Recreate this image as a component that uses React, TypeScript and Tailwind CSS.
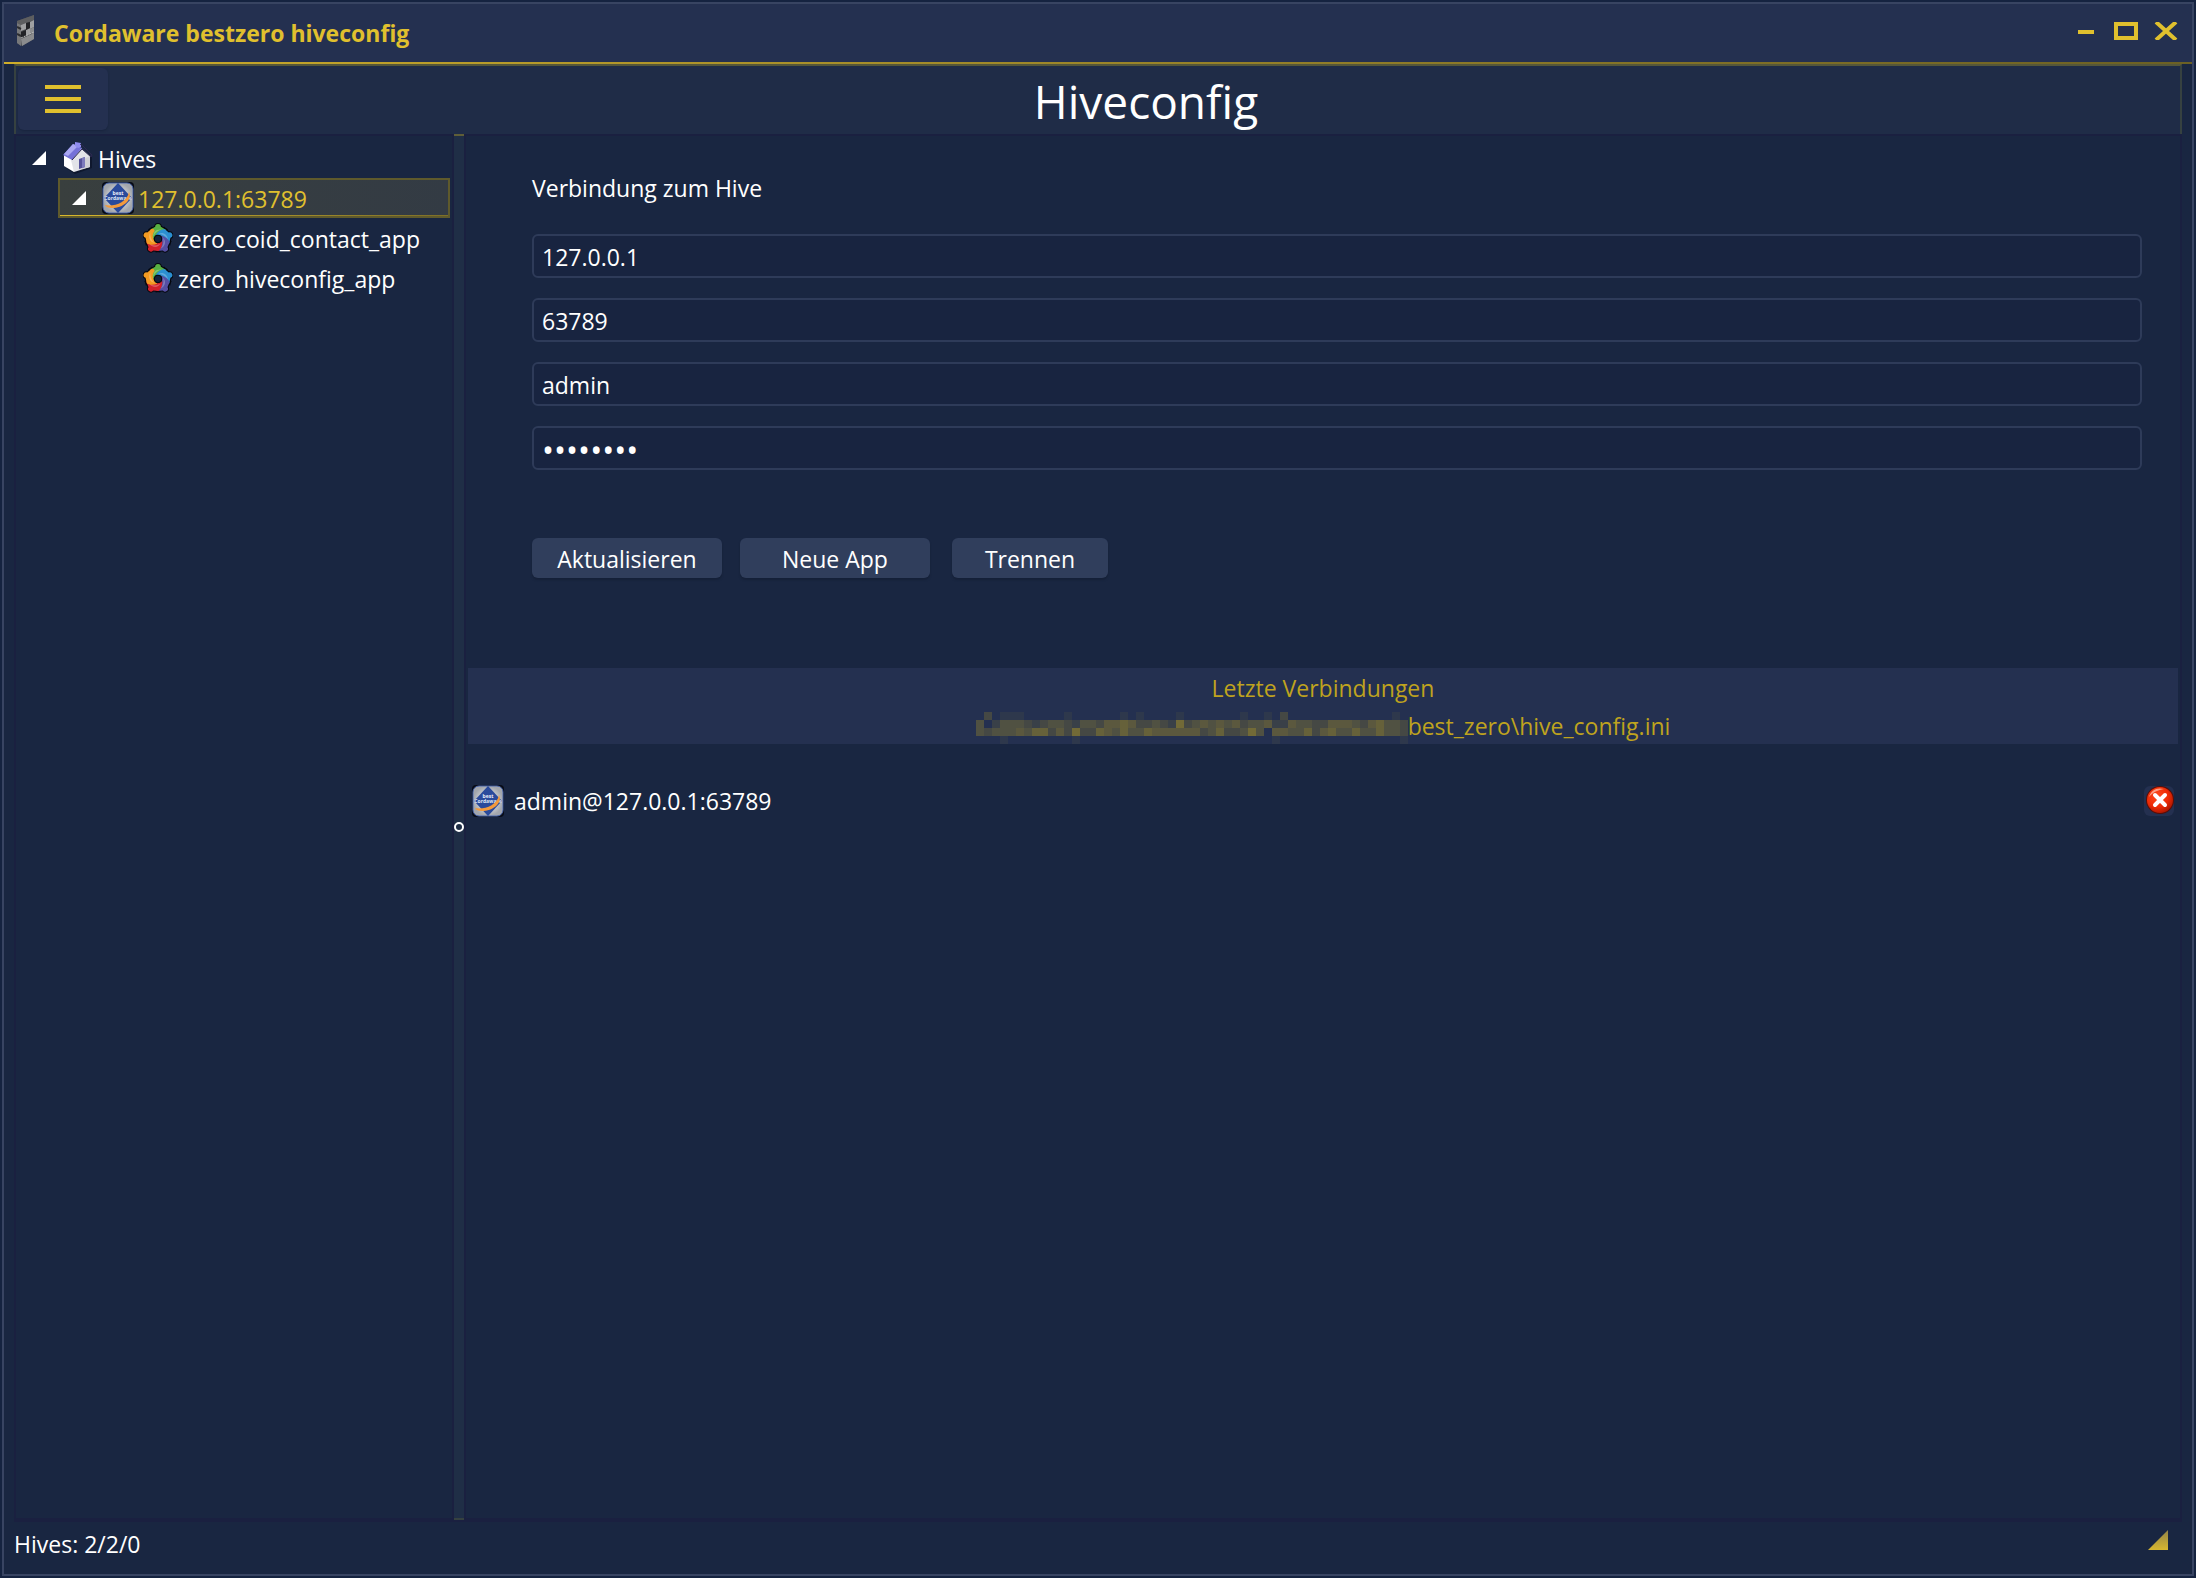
import type { ReactNode } from 'react'

interface Field {
  id: string
  label: string
  type: 'text' | 'password'
  value: string
}

const fields: Field[] = [
  { id: 'host', label: 'Host', type: 'text', value: '127.0.0.1' },
  { id: 'port', label: 'Port', type: 'text', value: '63789' },
  { id: 'user', label: 'Benutzer', type: 'text', value: 'admin' },
  { id: 'password', label: 'Passwort', type: 'password', value: 'password' },
]

const apps = ['zero_coid_contact_app', 'zero_hiveconfig_app']

// Strength of each 8px block that hides the private part of the path
const mosaic = [
  '030111000001000000101000010000000100103000000000000010',
  '402444323443244355653343273454545344522544335554356443',
  '434445466353733654644655555534633474055446356446446443',
  '000100000000100000000000000000000000010000000000000001',
]

const bladeColors = ['#58b043', '#2b8fd0', '#554fa3', '#d3202b', '#f39a22']
const bladeAngles = [0, 72, 144, 216, 288]

function Cube() {
  return (
    <svg width="18" height="32" viewBox="0 0 18 32" aria-hidden="true">
      <path d="M0 6 L17 0 V24 L5 31 L0 28Z" fill="#4c4d50" />
      <path d="M0 6 L17 0 V5 L4 10 L0 8Z" fill="#5d5e60" />
      <path d="M0 8 L4 10 V31 L0 28Z" fill="#77787a" />
      <path d="M4 10 L9 8 V14 L4 16Z M13 7 L17 5 V12 L13 14Z M9 15 L13 13 V19 L9 21Z" fill="#a0a1a3" />
      <path d="M4 17 L9 15 V21 L4 23Z M9 8 L13 7 V13 L9 15Z" fill="#222327" />
      <path d="M4 24 L17 18 V24 L5 31Z M13 14 L17 12 V18 L13 19Z" fill="#8b8c8e" />
      <path d="M0 12 L4 14 M0 19 L4 21" stroke="#2c2d30" strokeWidth="2" />
      <path d="M4 23 L17 17" stroke="#b9babb" strokeWidth="1" strokeDasharray="2 1" />
    </svg>
  )
}

function House() {
  return (
    <svg width="32" height="32" viewBox="0 0 32 32" aria-hidden="true">
      <path d="M4 26 L13 32 L30 26 L30 14Z" fill="#0c1326" opacity="0.7" />
      <path d="M2 13 L10 17 L12 20 V30 L2 24Z" fill="#ffffff" />
      <path d="M9 18 L19 6 L28 14 V25 L12 30Z" fill="#e2e3e8" />
      <path d="M20 18 L28 14 V25 L20 27Z" fill="#cfd0d6" />
      <path d="M17 17 L23 15 V25 L17 27Z" fill="#55529a" />
      <path d="M20 16 L23 15 V25 L20 26Z" fill="#7d7bbd" />
      <path d="M1 13 L11 2 L20 6 L10 18Z" fill="#7471d8" />
      <path d="M2 12 L11 2 L16 4 L6 14Z" fill="#a9a7f2" />
      <path d="M13 0 L19 1 V5 L16 6 L13 4Z" fill="#8f8cf0" />
      <path d="M18 2 L21 4 L30 13 L29 15 L20 7 L10 18" fill="none" stroke="#2c2850" strokeWidth="1" />
    </svg>
  )
}

function HiveLogo() {
  return (
    <svg width="32" height="32" viewBox="0 0 32 32" className="shrink-0" aria-hidden="true">
      <defs>
        <radialGradient id="hive-bg">
          <stop offset="0.3" stopColor="#e4e6e8" />
          <stop offset="1" stopColor="#a2a6ad" />
        </radialGradient>
      </defs>
      <rect width="32" height="32" rx="4" fill="#070b16" />
      <rect x="1" y="1" width="30" height="30" rx="6" fill="url(#hive-bg)" stroke="#4a68b0" strokeWidth="1" />
      <path d="M16 1 L30 16 L16 31 L2 16Z" fill="#2a4a9c" />
      <text x="16" y="13" textAnchor="middle" fontSize="5" fontWeight="700" fill="#eef1fa">best</text>
      <text x="16" y="18" textAnchor="middle" fontSize="5" fontWeight="700" fill="#dfe5f5">Cordaware</text>
      <path d="M3 23 C11 25 25 21 27 10 C31 18 21 26 10 26 C6 26 4 25 3 23Z" fill="#f39a3c" />
    </svg>
  )
}

function AppLogo() {
  return (
    <svg width="30" height="30" viewBox="0 0 32 32" className="shrink-0" aria-hidden="true">
      {bladeAngles.map(a => (
        <g key={a} transform={`rotate(${a} 16 17)`} fill="#05070d" stroke="#05070d" strokeWidth="2">
          <path d="M16 17 L7 7 L13 4 L19 4 L25 7Z" />
          <circle cx="16" cy="4" r="3" />
        </g>
      ))}
      {bladeAngles.map((a, i) => (
        <g key={a} transform={`rotate(${a} 16 17)`} fill={bladeColors[i]}>
          <path d="M11 18 C8 14 7 10 8 7 L13 4 L19 4 L24 7 C25 8 25 10 23 11 C19 9 13 11 11 18Z" />
          <circle cx="16" cy="4" r="3" />
          <path d="M11 15 C10 10 14 6 20 7 C16 8 12 11 11 15Z" fill="#fff" opacity="0.25" />
        </g>
      ))}
      <circle cx="16" cy="17" r="4" fill="#14213b" stroke="#05070d" strokeWidth="1" />
    </svg>
  )
}

function Expander() {
  return (
    <button type="button" aria-label="Einklappen" className="shrink-0">
      <svg width="14" height="14" viewBox="0 0 14 14" className="block">
        <path d="M14 0 V14 H0Z" fill="#fff" />
      </svg>
    </button>
  )
}

function PathMosaic() {
  return (
    <svg width="432" height="32" viewBox="0 0 432 32" shapeRendering="crispEdges" aria-hidden="true">
      {mosaic.flatMap((row, y) =>
        row.split('').map((v, x) =>
          v === '0' ? null : (
            <rect key={`${x}-${y}`} x={x * 8} y={y * 8} width="8" height="8" fill="#bfa31e" opacity={Number(v) / 14} />
          ),
        ),
      )}
    </svg>
  )
}

function ActionButton({ children, width }: { children: ReactNode; width: string }) {
  return (
    <button type="button" className={`${width} h-10 rounded-md bg-[#303e5c] pt-0.5 leading-8 shadow-[0_2px_2px_#152038]`}>
      {children}
    </button>
  )
}

function TitleBar() {
  return (
    <header>
      <div className="flex h-[58px] items-center bg-[#243050] pl-[13px] pr-3.5">
        <span className="pb-1">
          <Cube />
        </span>
        <span className="ml-[19px] font-bold text-[#e0c02e]">Cordaware bestzero hiveconfig</span>
        <div className="ml-auto flex items-center gap-5 pb-1">
          <button type="button" aria-label="Minimieren">
            <svg width="16" height="18" viewBox="0 0 16 18" className="block">
              <path d="M0 8 H16 V12 H0Z" fill="#e0c02e" />
            </svg>
          </button>
          <button type="button" aria-label="Maximieren">
            <svg width="24" height="18" viewBox="0 0 24 18" className="block">
              <rect x="2" y="2" width="20" height="14" fill="none" stroke="#e0c02e" strokeWidth="4" />
            </svg>
          </button>
          <button type="button" aria-label="Schließen" className="-ml-1">
            <svg width="24" height="18" viewBox="0 0 24 18" className="block">
              <path d="M2 0 L22 18 M22 0 L2 18" stroke="#e0c02e" strokeWidth="4" />
            </svg>
          </button>
        </div>
      </div>
      <div className="h-0.5 bg-linear-to-r from-[#cfae2a] to-[#6b6024]" />
    </header>
  )
}

function Toolbar() {
  return (
    <div className="mx-2.5 flex h-[70px] border-x-2 border-t-2 border-x-[#364140] border-t-[#55573a] bg-[#1f2c47] pt-0.5 pb-1 pl-0.5">
      <button
        type="button"
        aria-label="Menü"
        className="flex w-[90px] flex-col items-center justify-center gap-2 rounded-md bg-[#243050] shadow-[0_1px_2px_#18243e]"
      >
        <span className="h-1 w-9 bg-[#e0c02e]" />
        <span className="h-1 w-9 bg-[#e0c02e]" />
        <span className="h-1 w-9 bg-[#e0c02e]" />
      </button>
      <h1 className="flex-1 pl-1 text-center text-[46px] leading-[66px]">Hiveconfig</h1>
    </div>
  )
}

function HiveTree() {
  return (
    <nav aria-label="Hives" className="w-[440px] shrink-0 border-2 border-[#1a2040] pt-0.5">
      <div className="flex h-10 items-center pl-4">
        <Expander />
        <span className="ml-4 mr-1">
          <House />
        </span>
        <span className="pt-0.5">Hives</span>
      </div>
      <div className="ml-[42px] mr-0.5 flex h-10 flex-col justify-end border-2 border-[#5f5a2c] bg-linear-to-r from-[#393f3e] to-[#333b44] text-[#e0c02e]">
        <div className="flex flex-1 items-center pl-3">
          <Expander />
          <span className="ml-4 mr-1">
            <HiveLogo />
          </span>
          <span className="pt-0.5">127.0.0.1:63789</span>
        </div>
        <div className="h-px bg-linear-to-r from-[#d9b92d] to-[#7d6f28]" />
      </div>
      {apps.map(name => (
        <div key={name} className="flex h-10 items-center gap-[5px] pl-[127px]">
          <AppLogo />
          <span className="pt-0.5">{name}</span>
        </div>
      ))}
    </nav>
  )
}

function Splitter() {
  return (
    <div className="flex w-2.5 shrink-0 items-center border-y-2 border-t-[#5f5e38] border-b-[#364140] bg-[#1f2e46]">
      <span className="size-2.5 rounded-full border-2 border-white" />
    </div>
  )
}

function ConnectionForm() {
  return (
    <form className="ml-16 mr-9 pt-9">
      <h2>Verbindung zum Hive</h2>
      <div className="mt-[30px] flex flex-col gap-5">
        {fields.map(f => (
          <input
            key={f.id}
            id={f.id}
            type={f.type}
            aria-label={f.label}
            defaultValue={f.value}
            className={`h-11 w-full rounded-md border-2 border-[#2e3b59] bg-[#182440] px-2 pt-0.5 outline-none ${
              f.type === 'password' ? 'text-[32px]' : ''
            }`}
          />
        ))}
      </div>
      <div className="mt-[68px] flex">
        <ActionButton width="w-[190px]">Aktualisieren</ActionButton>
        <span className="w-[18px]" />
        <ActionButton width="w-[190px]">Neue App</ActionButton>
        <span className="w-[22px]" />
        <ActionButton width="w-[156px]">Trennen</ActionButton>
      </div>
    </form>
  )
}

function RecentConnections() {
  return (
    <section className="mt-[90px]">
      <div className="flex flex-col items-center bg-[#243050] text-[#bfa31e]">
        <h2 className="leading-10">Letzte Verbindungen</h2>
        <div className="flex items-end leading-9">
          <PathMosaic />
          best_zero\hive_config.ini
        </div>
      </div>
      <div className="mt-[41px] flex items-center px-1">
        <HiveLogo />
        <span className="ml-2.5">admin@127.0.0.1:63789</span>
        <button type="button" aria-label="Verbindung löschen" className="ml-auto rounded-md bg-[#243050] pl-0.5 pb-0.5">
          <svg width="28" height="28" viewBox="0 0 28 28" className="block">
            <defs>
              <radialGradient id="delete-bg" cx="0.4" cy="0.35" r="0.7">
                <stop offset="0" stopColor="#ff4a1c" />
                <stop offset="0.6" stopColor="#ee2c06" />
                <stop offset="1" stopColor="#a81500" />
              </radialGradient>
            </defs>
            <circle cx="14" cy="14" r="14" fill="#5a0d06" />
            <circle cx="14" cy="14" r="13" fill="url(#delete-bg)" />
            <path d="M3 11 C5 4 11 1 18 3 C12 4 7 6 3 11Z" fill="#ffb9a0" opacity="0.8" />
            <path d="M9 9 L19 19 M19 9 L9 19" stroke="#fff" strokeWidth="4" strokeLinecap="round" />
          </svg>
        </button>
      </div>
    </section>
  )
}

function StatusBar() {
  return (
    <footer className="mx-2.5 flex h-[52px] items-start justify-between pt-1.5">
      <span>Hives: 2/2/0</span>
      <svg width="20" height="20" viewBox="0 0 20 20" className="mt-0.5 mr-3.5" aria-hidden="true">
        <defs>
          <linearGradient id="grip" x1="0" y1="0" x2="0" y2="1">
            <stop offset="0" stopColor="#948447" />
            <stop offset="1" stopColor="#d6b630" />
          </linearGradient>
        </defs>
        <path d="M20 0 V20 H0Z" fill="url(#grip)" />
      </svg>
    </footer>
  )
}

export default function App() {
  return (
    <div className="flex min-h-screen flex-col bg-[#152340] p-0.5 font-['Open_Sans','Noto_Sans',sans-serif] text-[23px] leading-8 text-white">
      <div className="flex flex-1 flex-col border-2 border-[#384462] bg-[#192641]">
        <TitleBar />
        <Toolbar />
        <main className="mx-2.5 flex flex-1 border-b-2 border-[#1a2040]">
          <HiveTree />
          <Splitter />
          <div className="min-w-0 flex-1 border-2 border-[#1a2040] px-0.5">
            <ConnectionForm />
            <RecentConnections />
          </div>
        </main>
        <StatusBar />
      </div>
    </div>
  )
}
